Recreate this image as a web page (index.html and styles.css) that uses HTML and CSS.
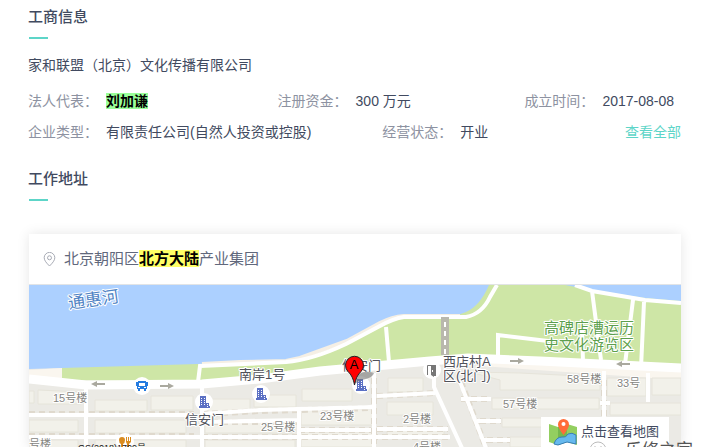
FILE: index.html
```html
<!DOCTYPE html>
<html lang="zh-CN">
<head>
<meta charset="utf-8">
<title>工商信息</title>
<link rel="stylesheet" href="styles.css">
</head>
<body>
<main class="page">
  <section class="company">
    <h2 class="title">工商信息</h2>
    <p class="company-name">家和联盟（北京）文化传播有限公司</p>
    <dl class="facts">
      <div class="fact fact-person"><dt>法人代表：</dt><dd><mark class="hit-green">刘加谦</mark></dd></div>
      <div class="fact"><dt>注册资金：</dt><dd>300 万元</dd></div>
      <div class="fact fact-date"><dt>成立时间：</dt><dd>2017-08-08</dd></div>
    </dl>
    <div class="facts">
      <dl class="facts-pair">
        <div class="fact"><dt>企业类型：</dt><dd>有限责任公司(自然人投资或控股)</dd></div>
        <div class="fact"><dt>经营状态：</dt><dd>开业</dd></div>
      </dl>
      <a class="more" href="#all">查看全部</a>
    </div>
  </section>
  <section class="location">
    <h2 class="title">工作地址</h2>
    <div class="card">
      <p class="address">
        <svg class="pin" viewBox="0 0 12 15" aria-hidden="true"><path d="M6 14C3 11 .7 8.500 .7 5.700a5.300 5.300 0 0 1 10.600 0C11.300 8.500 9 11 6 14Z"/><circle cx="6" cy="5.800" r="2"/></svg>
        <span>北京朝阳区<mark class="hit-yellow">北方大陆</mark>产业集团</span>
      </p>
      <div class="map">
        <svg class="map-art" viewBox="29 285 652 163" preserveAspectRatio="xMidYMin slice" role="img" aria-label="地图">
          <defs>
            <g id="building"><circle r="9" fill="#fff"/><path fill="#5b70c4" d="M-4-6h6V1h3v3h1v2H-5V4h1z"/><path stroke="#fff" stroke-dasharray="1 1" d="M-2.500-4V4M.5-4V4M3.500 2V5"/></g>
            <g id="arrow"><path d="M0 0H10" stroke="#aaa99f" stroke-width="2"/><path d="M8-3L14 0 8 3z" fill="#aaa99f"/></g>
          </defs>
          <path class="land" d="M29 285H681V448H29z"/>
          <path class="park" d="M62 366L260 358 300 346 380 312H460L480 285H681V370L580 362 440 360 202 382 62 380z"/>
          <path class="water" d="M29 285H489Q480 306 466 312L458 315H404Q392 316 380 322L347 341Q322 350 300 358L286 361 198 364 62 368 29 369z"/>
          <path class="bank" d="M202 364L240 362 286 361 300 358 347 341 380 323Q392 317 404 316H460"/>
          <path class="water" d="M565 285H681V301L645 298 592 290z"/>
          <path class="sand" d="M29 370L62 368V382L29 378z M470 360L681 370V380L480 366z"/>
          <g class="blocks">
            <path d="M29 391h5v12h-5zM38 390l43 2v12H38zM95 400h52v11H95zM151 396h42v14h-42zM208 399h42v14h-42zM29 420h49v12H29zM95 420h91v13H95zM205 420h89v13h-89zM95 440h91v8H95zM29 440h49v8H29zM254 395h42v12h-42zM302 389h50v12h-50zM301 409h72v16h-72zM301 432h72v15h-72zM388 378h35v14h-35zM387 402h46v13h-46zM387 430h57v7h-57zM205 440h90v8h-90zM470 372l30 8v10h100v-13l-80-4zM607 378h39v18h-39zM652 378h29v17h-29zM492 398h107v11H492zM610 403h71v12h-71zM502 418h98v9h-98zM510 437h90v10h-90z"/>
          </g>
          <g class="dash"><path d="M29 414H194M29 436H194M202 414L260 411 372 408M202 422H298M202 437H450M299 430H371M377 396L435 393M377 429H448M374 378V448M461 399H491M480 421H501M487 440H510M604 380V448M461 382L486 448"/></g>
          <g class="lanes"><path d="M29 415H194M29 437H194M86 388V448M202 385V448M202 414L260 410 372 407M202 422L298 420M194 437H450M299 408V448M299 430H371M374 373V448M377 396L435 393M377 429H448M461 399H491M477 421H501M484 440H510M604 371V448M600 403H610M648 373V402M434 372V387L462 448M460 382L486 448"/></g>
          <g class="roads">
            <path d="M198 382L200 366 286 362 Q312 360 346 344L378 327Q394 318 404 317H466Q482 314 490 297L497 285"/>
            <path d="M386 327L389 362M498 357V335L548 341M575 285L592 291 645 300 681 303M592 291L601 360M633 300L625 364M644 302L641 368M582 330L583 362"/>
          </g>
          <path class="main-road" d="M29 379L86 385 202 384 260 379 320 371 430 361 468 358 540 361 681 368"/>
          <path d="M445 317V355" stroke="#b9b8ad" stroke-width="8"/><path d="M445 322V355" stroke="#fff" stroke-width="2" stroke-dasharray="5 4"/>
          <use href="#arrow" transform="translate(105 384) rotate(180)"/><use href="#arrow" x="160" y="386"/>
          <use href="#arrow" x="510" y="361"/><use href="#arrow" transform="translate(630 364) rotate(180)"/>
          <g><circle cx="142" cy="386" r="9" fill="#fff"/><path fill="#247be0" d="M138 381h8v1h2v4h-1v3h-1v2h-2v-2h-4v2h-2v-2h-1v-3h-1v-4h2z"/><path fill="#fff" d="M139 383h6v3h-6zM138 387h2v1h-2zM144 387h2v1h-2z"/></g>
          <use href="#building" x="204" y="402"/><use href="#building" x="261" y="394"/><use href="#building" x="361" y="385"/>
          <g><circle cx="432" cy="370" r="9" fill="#fff"/><path fill="none" stroke="#777" d="M427.500 375V365.500H435.500V375"/><path fill="#777" d="M431 366l5-1v11h-2v1l-3-2z"/><path fill="#fff" d="M432 370h1v2h-1z"/></g>
          <g><circle cx="125" cy="442" r="9" fill="#fff"/><path fill="#d98b1f" d="M119 440q0-3 3-3t3 3q0 3-2 4v4h-2v-4q-2-1-2-4zM126 437h1v4h1v-4h1v4h1v-4h1v5l-2 2v4h-2v-4l-1-2z"/></g>
          <g class="label river"><text x="69" y="309" transform="rotate(-8 69 309)">通惠河</text></g>
          <g class="label area"><text x="544" y="333">高碑店漕运历</text><text x="544" y="350">史文化游览区</text></g>
          <g class="label place"><text x="239" y="379">南岸1号</text><text x="185" y="424">信安门</text><text x="342" y="370">信安门</text><text x="443" y="366">西店村A</text><text x="443" y="380">区(北门)</text></g>
          <g class="label number"><text x="53" y="402">15号楼</text><text x="29" y="448">号楼</text><text x="261" y="431">25号楼</text><text x="320" y="420">23号楼</text><text x="403" y="423">2号楼</text><text x="413" y="451">4号楼</text><text x="567" y="383">58号楼</text><text x="617" y="387">33号</text><text x="503" y="408">57号楼</text></g>
          <text class="license" x="78" y="451">GS(2018)1709号</text>
          <path fill="#777" opacity=".6" d="M354 384L359 374Q366 370 374 373 373 378 362 380z"/>
          <path fill="#f00" stroke="#222" d="M354.500 385Q353 376 348 371.500A9 9 0 1 1 361 371.500Q356 376 354.500 385z"/>
          <text class="marker" x="354" y="369">A</text>
        </svg>
        <a class="map-link" href="#map">
          <svg class="map-icon" viewBox="0 0 28 28" aria-hidden="true"><path fill="#93cf60" d="M0 6L9 9 18 6 28 9V27L18 24 9 27 0 24z"/><path fill="#75b84e" d="M9 9L18 6V24L9 27z"/><path fill="#66b9ee" stroke="#397fb7" d="M5 26Q7 19 13 19 17 20 19 16 23 14 27 17V26L18 24 9 27z"/><path fill="#ff6c38" d="M14.500 17Q9 10 9 6.500A5.500 5.500 0 0 1 20 6.500Q20 10 14.500 17z"/><circle cx="14.500" cy="6" r="2" fill="#fff"/></svg>
          <span>点击查看地图</span>
        </a>
      </div>
      <div class="watermark"><svg class="watermark-icon" viewBox="0 0 20 18" aria-hidden="true"><circle cx="9" cy="9" r="8"/><path d="M5 6h2M11 6h2"/></svg><span>乐修之家</span></div>
    </div>
  </section>
</main>
</body>
</html>
```
FILE: styles.css
```css
* { box-sizing: border-box; }
html { overflow: hidden; }
body {
  margin: 0;
  background: #fff;
  color: #414a60;
  font: 14px/20px "Liberation Sans", "Noto Sans CJK SC", sans-serif;
}
h2, p, dl, dd { margin: 0; }
.page { padding: 6px 25px 0 28px; }
.title { font-size: 15px; line-height: 22px; font-weight: 500; }
.title::after {
  content: "";
  display: block;
  width: 19px;
  height: 2px;
  margin: 9px 0 0 1px;
  background: #5dd5c8;
}
.company-name { margin-top: 16px; }
.facts { display: flex; justify-content: space-between; margin-top: 16px; }
.facts + .facts { margin-top: 11px; }
.facts-pair { display: flex; gap: 71px; }
.fact { display: flex; gap: 8px; }
.fact-person { margin-right: 16px; }
.fact-date { margin-right: 7px; }
dt { color: #8d92a1; }
mark { color: #000; font-weight: 700; }
.hit-green { background: #9f9; }
.hit-yellow { background: #ff6; }
.more { color: #5dd5c8; text-decoration: none; }
.location { margin-top: 26px; }
.card {
  position: relative;
  margin: 33px 0 0 1px;
  background: #fff;
  box-shadow: 0 0 12px rgba(0, 0, 0, .1);
}
.address {
  display: flex;
  align-items: center;
  gap: 8px;
  padding: 14px;
  border-bottom: 1px solid #e2e4e6;
  color: #61687c;
  font-size: 15px;
  line-height: 22px;
}
.pin { width: 13px; height: 15px; fill: none; stroke: #a8abb5; }
.map { position: relative; overflow: hidden; }
.map-art { display: block; width: 100%; height: 163px; }
.land { fill: #ebeae5; }
.park { fill: #cee6a6; }
.water { fill: #acd0ff; }
.sand { fill: #faf6ef; }
.bank { fill: none; stroke: #f5efe5; stroke-width: 4px; }
.blocks { fill: #f2f1ea; stroke: #e6e4da; }
.dash { fill: none; stroke: #dfd9cd; stroke-width: 6px; stroke-dasharray: 6 4; }
.lanes { fill: none; stroke: #fff; stroke-width: 4px; }
.roads { fill: none; stroke: #fff; stroke-width: 4px; }
.main-road { fill: none; stroke: #fff; stroke-width: 9px; }
.label { paint-order: stroke; stroke: #fff; stroke-width: 2px; stroke-linejoin: round; }
.river { font-size: 17px; fill: #4f83c4; }
.area { font-size: 15px; fill: #5c9f4d; }
.place { font-size: 13px; fill: #50515a; }
.number { font-size: 11px; fill: #85857f; }
.license { font-size: 9px; fill: #111; }
.marker { font-size: 13px; text-anchor: middle; }
.map-link {
  position: absolute;
  top: 132px;
  right: 12px;
  display: flex;
  align-items: center;
  gap: 4px;
  padding: 0 10px 0 8px;
  background: #fff;
  color: #414a60;
  font-size: 13px;
  line-height: 30px;
  text-decoration: none;
}
.map-icon { width: 28px; height: 28px; }
.watermark {
  position: absolute;
  top: 207px;
  right: -12px;
  display: flex;
  gap: 16px;
  color: #555;
  font-size: 17px;
}
.watermark-icon { width: 20px; height: 18px; fill: #fff; stroke: #bbb; }
```
